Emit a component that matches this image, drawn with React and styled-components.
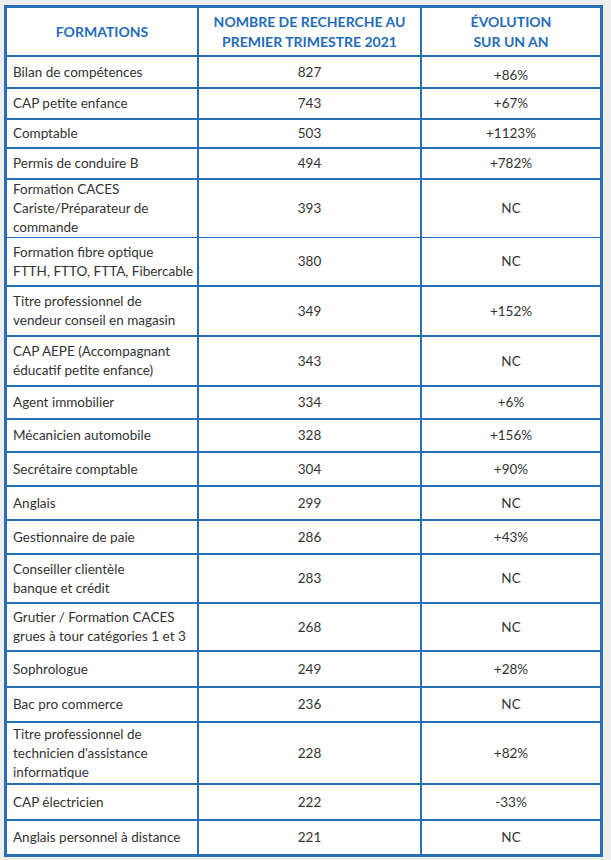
import React from 'react'
import styled, { createGlobalStyle } from 'styled-components'

const GlobalStyle = createGlobalStyle`
  html, body {
    margin: 0;
    padding: 0;
    background: #eeeeee;
  }
  body {
    font-family: Lato, "Liberation Sans", sans-serif;
  }
`

const Page = styled.div`
  padding: 5px 0 0 4px;
`

const Table = styled.div`
  width: 593px;
  display: flex;
  flex-direction: column;
  gap: 2px;
  padding: 3px;
  background: #2a6fb6;
`

const Row = styled.div`
  display: grid;
  grid-template-columns: 190px 221px 178px;
  column-gap: 2px;
  height: ${p => p.$h}px;
`

const Cell = styled.div`
  background: #ffffff;
  display: flex;
  align-items: center;
  justify-content: ${p => (p.$left ? 'flex-start' : 'center')};
  text-align: ${p => (p.$left ? 'left' : 'center')};
  padding: 0 ${p => (p.$left ? '6px' : '4px')};
  padding-top: ${p => p.$down || 0}px;
  font-size: 13.5px;
  line-height: 19px;
  color: #333333;
  white-space: nowrap;
  box-sizing: border-box;
`

const HeadCell = styled(Cell)`
  font-weight: 700;
  font-size: 14px;
  line-height: 20px;
  color: #1f6db8;
  padding: 0 4px;
`

const rows = [
  { name: 'Bilan de compétences', n: '827', evo: '+86%', h: 30, down: 6 },
  { name: 'CAP petite enfance', n: '743', evo: '+67%', h: 29 },
  { name: 'Comptable', n: '503', evo: '+1123%', h: 27 },
  { name: 'Permis de conduire B', n: '494', evo: '+782%', h: 29 },
  { name: ['Formation CACES', 'Cariste/Préparateur de', 'commande'], n: '393', evo: 'NC', h: 56 },
  { name: ['Formation fibre optique', 'FTTH, FTTO, FTTA, Fibercable'], n: '380', evo: 'NC', h: 47 },
  { name: ['Titre professionnel de', 'vendeur conseil en magasin'], n: '349', evo: '+152%', h: 48 },
  { name: ['CAP AEPE (Accompagnant', 'éducatif petite enfance)'], n: '343', evo: 'NC', h: 48 },
  { name: 'Agent immobilier', n: '334', evo: '+6%', h: 31 },
  { name: 'Mécanicien automobile', n: '328', evo: '+156%', h: 31 },
  { name: 'Secrétaire comptable', n: '304', evo: '+90%', h: 32 },
  { name: 'Anglais', n: '299', evo: 'NC', h: 32 },
  { name: 'Gestionnaire de paie', n: '286', evo: '+43%', h: 32 },
  { name: ['Conseiller clientèle', 'banque et crédit'], n: '283', evo: 'NC', h: 47 },
  { name: ['Grutier / Formation CACES', 'grues à tour catégories 1 et 3'], n: '268', evo: 'NC', h: 46 },
  { name: 'Sophrologue', n: '249', evo: '+28%', h: 34 },
  { name: 'Bac pro commerce', n: '236', evo: 'NC', h: 33 },
  { name: ['Titre professionnel de', "technicien d'assistance", 'informatique'], n: '228', evo: '+82%', h: 60 },
  { name: 'CAP électricien', n: '222', evo: '-33%', h: 34 },
  { name: 'Anglais personnel à distance', n: '221', evo: 'NC', h: 33 },
]

const Lines = ({ text }) =>
  Array.isArray(text)
    ? <span>{text.map((t, i) => <React.Fragment key={i}>{i > 0 && <br />}{t}</React.Fragment>)}</span>
    : <span>{text}</span>

const App = () => {
  return (
    <>
      <GlobalStyle />
      <Page>
        <Table>
          <Row $h={47}>
            <HeadCell>FORMATIONS</HeadCell>
            <HeadCell>NOMBRE DE RECHERCHE AU<br />PREMIER TRIMESTRE 2021</HeadCell>
            <HeadCell>ÉVOLUTION<br />SUR UN AN</HeadCell>
          </Row>
          {rows.map((r, i) => (
            <Row key={i} $h={r.h}>
              <Cell $left><Lines text={r.name} /></Cell>
              <Cell>{r.n}</Cell>
              <Cell $down={r.down}>{r.evo}</Cell>
            </Row>
          ))}
        </Table>
      </Page>
    </>
  )
}

export default App
